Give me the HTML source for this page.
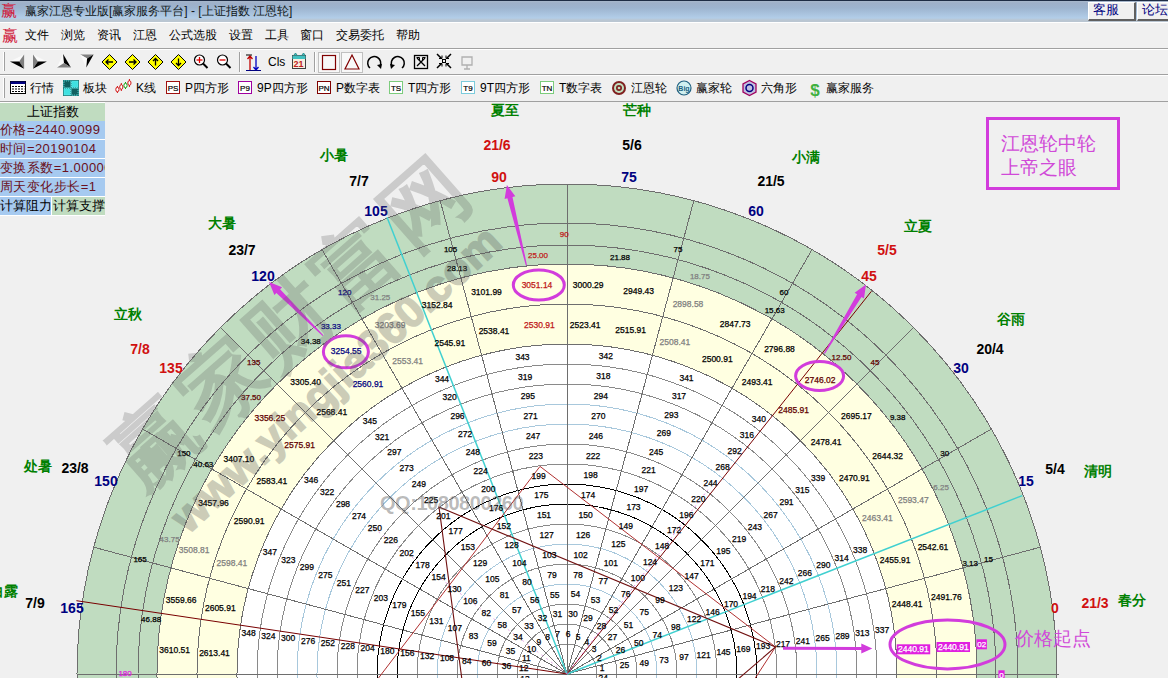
<!DOCTYPE html><html><head><meta charset="utf-8"><style>
*{margin:0;padding:0;box-sizing:border-box}
html,body{width:1168px;height:678px;overflow:hidden;background:#f0f0f0;font-family:"Liberation Sans",sans-serif;position:relative}
.a{position:absolute;white-space:nowrap}
#title{left:0;top:0;width:1168px;height:23px;background:linear-gradient(#1e2c44 0px,#1e2c44 1px,#a8b8cc 1px,#9eb0c9 3px,#9db4cf 8px,#b2cde8 18px,#bac6d2 20px,#bac6d2 21.7px,#fff 21.7px,#fff 22.8px,#f0f0f0 22.8px)}
.t12{font-size:12px;line-height:14px}
.tb{font-size:12px;line-height:14px;color:#000}
</style></head><body>

<div id="title" class="a"></div>
<div class="a" style="left:1px;top:2px;color:#d0203c;font-size:16px;line-height:17px;font-family:'Liberation Serif',serif">赢</div>
<div class="a t12" style="left:25px;top:4px;color:#101820">赢家江恩专业版[赢家服务平台] - [上证指数 江恩轮]</div>
<div class="a" style="left:1088px;top:2px;width:48px;height:19px;background:#f0f0f0;border-right:2px solid #606060;border-bottom:2px solid #606060;border-top:1px solid #fff;border-left:1px solid #fff"></div>
<div class="a" style="left:1137px;top:2px;width:31px;height:19px;background:#f0f0f0;border-bottom:2px solid #606060;border-top:1px solid #fff;border-left:1px solid #fff"></div>
<div class="a" style="left:1093px;top:2px;font-size:13px;line-height:15px;color:#000080">客服</div>
<div class="a" style="left:1142px;top:2px;font-size:13px;line-height:15px;color:#000080">论坛</div>
<div class="a" style="left:2px;top:27px;color:#d0203c;font-size:16px;line-height:17px;font-family:'Liberation Serif',serif">赢</div>
<div class="a t12" style="left:25px;top:28px;color:#000">文件</div>
<div class="a t12" style="left:61px;top:28px;color:#000">浏览</div>
<div class="a t12" style="left:97px;top:28px;color:#000">资讯</div>
<div class="a t12" style="left:133px;top:28px;color:#000">江恩</div>
<div class="a t12" style="left:169px;top:28px;color:#000">公式选股</div>
<div class="a t12" style="left:229px;top:28px;color:#000">设置</div>
<div class="a t12" style="left:265px;top:28px;color:#000">工具</div>
<div class="a t12" style="left:300px;top:28px;color:#000">窗口</div>
<div class="a t12" style="left:336px;top:28px;color:#000">交易委托</div>
<div class="a t12" style="left:396px;top:28px;color:#000">帮助</div>
<div class="a" style="left:0;top:48px;width:1168px;height:1px;background:#a0a0a0"></div>
<div class="a" style="left:0;top:49px;width:1168px;height:1px;background:#fff"></div>
<div class="a" style="left:0;top:74px;width:1168px;height:1px;background:#a0a0a0"></div>
<div class="a" style="left:0;top:75px;width:1168px;height:1px;background:#fff"></div>
<div class="a" style="left:0;top:101px;width:1168px;height:1px;background:#a0a0a0"></div>
<div class="a" style="left:3px;top:52px;width:2px;height:19px;border-left:1px solid #fff;border-right:1px solid #a0a0a0"></div>
<div class="a" style="left:3px;top:78px;width:2px;height:20px;border-left:1px solid #fff;border-right:1px solid #a0a0a0"></div>
<svg class="a" style="left:0;top:0" width="1168" height="101"><polygon points="9.9,61.4 24.1,54.5 19.2,61.4" fill="#fafafa"/><polygon points="24.1,54.5 24.1,68.7 19.2,61.4" fill="#808080"/><polygon points="9.9,61.4 19.2,61.4 24.1,68.7" fill="#000"/><polygon points="33,54.5 46.9,61.4 37.9,61.4" fill="#fafafa"/><polygon points="33,54.5 37.9,61.4 33,68.7" fill="#808080"/><polygon points="37.9,61.4 46.9,61.4 33,68.7" fill="#000"/><polygon points="63.1,54.1 64,63 57,67.5" fill="#fafafa"/><polygon points="63.1,54.1 70.9,67.5 64,63" fill="#000"/><polygon points="57,67.5 64,63 70.9,67.5" fill="#808080"/><polygon points="80.2,54.5 93.6,54.5 87.1,58.5" fill="#808080"/><polygon points="80.2,54.5 87.1,58.5 86.3,67.5" fill="#fafafa"/><polygon points="87.1,58.5 93.6,54.5 86.3,67.5" fill="#000"/><polygon points="109.5,54.5 117.0,62 109.5,69.5 102.0,62" fill="#ffff00" stroke="#000" stroke-width="1"/><path d="M113.0,62 H106.0 M108.5,59.5 L106.0,62 L108.5,64.5" stroke="#000" fill="none" stroke-width="1.3"/><polygon points="132.5,54.5 140.0,62 132.5,69.5 125.0,62" fill="#ffff00" stroke="#000" stroke-width="1"/><path d="M129.0,62 H136.0 M133.5,59.5 L136.0,62 L133.5,64.5" stroke="#000" fill="none" stroke-width="1.3"/><polygon points="155.5,54.5 163.0,62 155.5,69.5 148.0,62" fill="#ffff00" stroke="#000" stroke-width="1"/><path d="M155.5,65.5 V58.5 M153.0,61 L155.5,58.5 L158.0,61" stroke="#000" fill="none" stroke-width="1.3"/><polygon points="178.5,54.5 186.0,62 178.5,69.5 171.0,62" fill="#ffff00" stroke="#000" stroke-width="1"/><path d="M178.5,58.5 V65.5 M176.0,63 L178.5,65.5 L181.0,63" stroke="#000" fill="none" stroke-width="1.3"/><circle cx="199.5" cy="60" r="5" fill="#fff" stroke="#000" stroke-width="1.2"/><line x1="203.0" y1="63.5" x2="207.5" y2="68" stroke="#000" stroke-width="2"/><line x1="196.5" y1="60" x2="202.5" y2="60" stroke="#d00" stroke-width="1.3"/><line x1="199.5" y1="57" x2="199.5" y2="63" stroke="#d00" stroke-width="1.3"/><circle cx="222.5" cy="60" r="5" fill="#fff" stroke="#000" stroke-width="1.2"/><line x1="226.0" y1="63.5" x2="230.5" y2="68" stroke="#000" stroke-width="2"/><line x1="219.5" y1="60" x2="225.5" y2="60" stroke="#d00" stroke-width="1.3"/><line x1="239.5" y1="52" x2="239.5" y2="72" stroke="#a0a0a0"/><line x1="240.5" y1="52" x2="240.5" y2="72" stroke="#fff"/><path d="M250,70 V56 M247.5,59 L250,56 L252.5,59" stroke="#c00000" fill="none" stroke-width="1.3"/><path d="M256,56 V70 M253.5,67 L256,70 L258.5,67" stroke="#0000c0" fill="none" stroke-width="1.3"/><line x1="246" y1="70.5" x2="261" y2="70.5" stroke="#000080"/><line x1="246" y1="55" x2="252" y2="55" stroke="#000"/><rect x="292.5" y="55.5" width="13" height="13" fill="#f8f0e0" stroke="#404040"/><rect x="292.5" y="55.5" width="13" height="3.5" fill="#40c0c0"/><path d="M294,55 l1.5,-2 l1.5,2 M302,55 l1.5,-2 l1.5,2" fill="#40c0c0" stroke="#208080" stroke-width="0.8"/><line x1="314.5" y1="52" x2="314.5" y2="72" stroke="#a0a0a0"/><line x1="315.5" y1="52" x2="315.5" y2="72" stroke="#fff"/><rect x="318.5" y="52.5" width="21" height="20" fill="#f8f8f8" stroke="#c0c0c0"/><rect x="341.5" y="52.5" width="21" height="20" fill="#f8f8f8" stroke="#c0c0c0"/><rect x="322.5" y="55.5" width="13" height="14" fill="none" stroke="#800000" stroke-width="1.2"/><polygon points="352,55 359,69 345,69" fill="none" stroke="#800000" stroke-width="1.2"/><path d="M370,68 A6.5,6.5 0 1 1 380,66" fill="none" stroke="#000" stroke-width="1.5"/><polygon points="377,65 382,64 381,69" fill="#000"/><path d="M402,68 A6.5,6.5 0 1 0 392,66" fill="none" stroke="#000" stroke-width="1.5"/><polygon points="395,65 390,64 391,69" fill="#000"/><rect x="414.5" y="55.5" width="13" height="13" fill="none" stroke="#000" stroke-width="1.3"/><path d="M417,58 L425,66 M425,58 L417,66" stroke="#000" stroke-width="1.3"/><path d="M416.5,57.5 h3 v3 M425.5,57.5 h-3 v3" fill="none" stroke="#000"/><path d="M437,54 L441.5,58.5 M451,54 L446.5,58.5 M437,68 L441.5,63.5 M451,68 L446.5,63.5" stroke="#000" stroke-width="1.5"/><path d="M439,58.5 h3 v-3 M449,58.5 h-3 v-3 M439,63.5 h3 v3 M449,63.5 h-3 v3" fill="none" stroke="#000" stroke-width="1"/><rect x="442.5" y="59.5" width="3" height="3" fill="none" stroke="#000"/><path d="M462,57 h10 v8 h-10 z M467,65 v4 M464,69 h6" fill="none" stroke="#b0b0b0" stroke-width="1.3"/><text x="268" y="66" font-size="12" fill="#000" font-family="Liberation Sans">Cls</text><text x="293.5" y="67" font-size="9" fill="#c02020" font-family="Liberation Sans" font-weight="bold">21</text><rect x="10.5" y="81.5" width="15" height="12" fill="#fff" stroke="#000" stroke-width="1"/><rect x="10.5" y="81.5" width="15" height="2.5" fill="#000080"/><line x1="12" y1="86.5" x2="24.5" y2="86.5" stroke="#000" stroke-dasharray="2,1" stroke-width="1"/><line x1="12" y1="89" x2="24.5" y2="89" stroke="#000" stroke-dasharray="2,1" stroke-width="1"/><line x1="12" y1="91.5" x2="24.5" y2="91.5" stroke="#000" stroke-dasharray="2,1" stroke-width="1"/><rect x="63" y="80" width="16" height="16" fill="#208080"/><rect x="64" y="81" width="6.5" height="6.5" fill="#106060" stroke="#80ffff" stroke-width="0.6" stroke-dasharray="1,1"/><rect x="71.5" y="81" width="6.5" height="6.5" fill="#40e0e0" stroke="#80ffff" stroke-width="0.6" stroke-dasharray="1,1"/><rect x="64" y="88.5" width="6.5" height="6.5" fill="#40e0e0" stroke="#80ffff" stroke-width="0.6" stroke-dasharray="1,1"/><rect x="71.5" y="88.5" width="6.5" height="6.5" fill="#106060" stroke="#80ffff" stroke-width="0.6" stroke-dasharray="1,1"/><line x1="117.4" y1="86" x2="117.4" y2="93" stroke="#d01010" stroke-width="1"/><ellipse cx="117.4" cy="89.5" rx="1.6" ry="2.3" fill="#fff" stroke="#d01010" stroke-width="1"/><line x1="121.3" y1="83" x2="121.3" y2="91" stroke="#d01010" stroke-width="1"/><ellipse cx="121.3" cy="87.0" rx="1.6" ry="2.3" fill="#fff" stroke="#d01010" stroke-width="1"/><line x1="125.5" y1="82" x2="125.5" y2="89" stroke="#10a010" stroke-width="1"/><ellipse cx="125.5" cy="85.5" rx="1.6" ry="2.3" fill="#fff" stroke="#10a010" stroke-width="1"/><line x1="129.4" y1="79" x2="129.4" y2="87" stroke="#d01010" stroke-width="1"/><ellipse cx="129.4" cy="83.0" rx="1.6" ry="2.3" fill="#fff" stroke="#d01010" stroke-width="1"/><rect x="166.5" y="81.5" width="13" height="12" fill="#fff" stroke="#a01010"/><text x="173" y="91" font-size="8" fill="#000" stroke="#000" stroke-width="0.2" text-anchor="middle" font-family="Liberation Sans">PS</text><rect x="238.5" y="81.5" width="13" height="12" fill="#fff" stroke="#a000a0"/><text x="245" y="91" font-size="8" fill="#000" stroke="#000" stroke-width="0.2" text-anchor="middle" font-family="Liberation Sans">P9</text><rect x="317.5" y="81.5" width="13" height="12" fill="#fff" stroke="#800000"/><text x="324" y="91" font-size="8" fill="#000" stroke="#000" stroke-width="0.2" text-anchor="middle" font-family="Liberation Sans">PN</text><rect x="389.5" y="81.5" width="13" height="12" fill="#fff" stroke="#00a000" stroke-dasharray="1,1"/><text x="396" y="91" font-size="8" fill="#000" stroke="#000" stroke-width="0.2" text-anchor="middle" font-family="Liberation Sans">TS</text><rect x="461.5" y="81.5" width="13" height="12" fill="#fff" stroke="#00a0c0" stroke-dasharray="1,1"/><text x="468" y="91" font-size="8" fill="#000" stroke="#000" stroke-width="0.2" text-anchor="middle" font-family="Liberation Sans">T9</text><rect x="540.5" y="81.5" width="13" height="12" fill="#fff" stroke="#00a000" stroke-dasharray="1,1"/><text x="547" y="91" font-size="8" fill="#000" stroke="#000" stroke-width="0.2" text-anchor="middle" font-family="Liberation Sans">TN</text><circle cx="619" cy="88" r="7" fill="#802020"/><circle cx="619" cy="88" r="5" fill="#c0e0c0"/><circle cx="619" cy="88" r="3" fill="#802020"/><circle cx="619" cy="88" r="1.3" fill="#c0e0c0"/><circle cx="684" cy="88" r="7" fill="#d0f0f0" stroke="#206080" stroke-width="1.2"/><text x="684" y="91" font-size="7" text-anchor="middle" fill="#206080" font-family="Liberation Sans" font-weight="bold">Big</text><polygon points="749.5,80.5 756,84 756,92 749.5,95.5 743,92 743,84" fill="#c0c0e0" stroke="#a00060" stroke-width="1.3"/><circle cx="749.5" cy="88" r="3.5" fill="none" stroke="#000080" stroke-width="1.5"/><text x="815" y="95.5" font-size="17" text-anchor="middle" fill="#40b040" font-family="Liberation Sans" font-weight="bold">$</text></svg>
<div class="a tb" style="left:30px;top:81px">行情</div>
<div class="a tb" style="left:83px;top:81px">板块</div>
<div class="a tb" style="left:136px;top:81px">K线</div>
<div class="a tb" style="left:185px;top:81px">P四方形</div>
<div class="a tb" style="left:257px;top:81px">9P四方形</div>
<div class="a tb" style="left:336px;top:81px">P数字表</div>
<div class="a tb" style="left:408px;top:81px">T四方形</div>
<div class="a tb" style="left:480px;top:81px">9T四方形</div>
<div class="a tb" style="left:559px;top:81px">T数字表</div>
<div class="a tb" style="left:631px;top:81px">江恩轮</div>
<div class="a tb" style="left:696px;top:81px">赢家轮</div>
<div class="a tb" style="left:761px;top:81px">六角形</div>
<div class="a tb" style="left:826px;top:81px">赢家服务</div>
<div class="a" style="left:0;top:102px;width:105px;height:114px;background:#fff"></div>
<div class="a" style="left:0;top:103px;width:105px;height:18px;background:#c0dcc0;font-size:13px;line-height:18px;text-align:center;color:#000">上证指数</div>
<div class="a" style="left:0;top:121px;width:105px;height:18px;background:#a6caf0;font-size:13px;line-height:18px;color:#6a1020;overflow:hidden;letter-spacing:0.45px">价格=2440.9099</div>
<div class="a" style="left:0;top:140px;width:105px;height:18px;background:#a6caf0;font-size:13px;line-height:18px;color:#6a1020;overflow:hidden;letter-spacing:0.45px">时间=20190104</div>
<div class="a" style="left:0;top:159px;width:105px;height:18px;background:#a6caf0;font-size:13px;line-height:18px;color:#6a1020;overflow:hidden;letter-spacing:0.45px">变换系数=1.000000</div>
<div class="a" style="left:0;top:178px;width:105px;height:18px;background:#a6caf0;font-size:13px;line-height:18px;color:#6a1020;overflow:hidden;letter-spacing:0.45px">周天变化步长=1</div>
<div class="a" style="left:0;top:197px;width:51px;height:18px;background:#a6caf0;font-size:13px;line-height:18px;color:#000;overflow:hidden">计算阻力</div>
<div class="a" style="left:52px;top:197px;width:53px;height:18px;background:#c0dcc0;font-size:13px;line-height:18px;color:#000;overflow:hidden;text-align:center">计算支撑</div>
<svg class="a" style="left:0;top:102px" width="1168" height="576" viewBox="0 102 1168 576"><g shape-rendering="crispEdges"><circle cx="567" cy="674" r="490" fill="#c0dcc0" stroke="#6e6e6e" stroke-width="1"/><circle cx="567" cy="674" r="410" fill="#ffffe1" stroke="#6e6e6e" stroke-width="1"/><circle cx="567" cy="674" r="330" fill="#fff" stroke="#6e6e6e" stroke-width="1"/><circle cx="567" cy="674" r="451" fill="none" stroke="#6e6e6e" stroke-width="1"/><circle cx="567" cy="674" r="429" fill="none" stroke="#6e6e6e" stroke-width="1"/><circle cx="567" cy="674" r="370" fill="none" stroke="#6e6e6e" stroke-width="1"/><circle cx="567" cy="674" r="30" fill="none" stroke="#8a8a8a" stroke-width="1"/><circle cx="567" cy="674" r="50" fill="none" stroke="#8a8a8a" stroke-width="1"/><circle cx="567" cy="674" r="70" fill="none" stroke="#8a8a8a" stroke-width="1"/><circle cx="567" cy="674" r="90" fill="none" stroke="#a8c8dc" stroke-width="1"/><circle cx="567" cy="674" r="110" fill="none" stroke="#8a8a8a" stroke-width="1"/><circle cx="567" cy="674" r="130" fill="none" stroke="#a8c8dc" stroke-width="1"/><circle cx="567" cy="674" r="150" fill="none" stroke="#8a8a8a" stroke-width="1"/><circle cx="567" cy="674" r="170" fill="none" stroke="#8a8a8a" stroke-width="1"/><circle cx="567" cy="674" r="190" fill="none" stroke="#8a8a8a" stroke-width="1"/><circle cx="567" cy="674" r="210" fill="none" stroke="#8a8a8a" stroke-width="1"/><circle cx="567" cy="674" r="230" fill="none" stroke="#8a8a8a" stroke-width="1"/><circle cx="567" cy="674" r="250" fill="none" stroke="#a8c8dc" stroke-width="1"/><circle cx="567" cy="674" r="270" fill="none" stroke="#a8c8dc" stroke-width="1"/><circle cx="567" cy="674" r="290" fill="none" stroke="#8a8a8a" stroke-width="1"/><circle cx="567" cy="674" r="310" fill="none" stroke="#8a8a8a" stroke-width="1"/><circle cx="567" cy="674" r="170" fill="none" stroke="#000" stroke-width="1"/><circle cx="567" cy="674" r="190" fill="none" stroke="#000" stroke-width="1"/><line x1="567.0" y1="674.0" x2="1057.0" y2="674.0" stroke="#6e6e6e" stroke-width="1"/><line x1="567.0" y1="674.0" x2="1040.3" y2="547.2" stroke="#6e6e6e" stroke-width="1"/><line x1="567.0" y1="674.0" x2="991.4" y2="429.0" stroke="#6e6e6e" stroke-width="1"/><line x1="567.0" y1="674.0" x2="913.5" y2="327.5" stroke="#6e6e6e" stroke-width="1"/><line x1="567.0" y1="674.0" x2="812.0" y2="249.6" stroke="#6e6e6e" stroke-width="1"/><line x1="567.0" y1="674.0" x2="693.8" y2="200.7" stroke="#6e6e6e" stroke-width="1"/><line x1="567.0" y1="674.0" x2="567.0" y2="184.0" stroke="#6e6e6e" stroke-width="1"/><line x1="567.0" y1="674.0" x2="440.2" y2="200.7" stroke="#6e6e6e" stroke-width="1"/><line x1="567.0" y1="674.0" x2="322.0" y2="249.6" stroke="#6e6e6e" stroke-width="1"/><line x1="567.0" y1="674.0" x2="220.5" y2="327.5" stroke="#6e6e6e" stroke-width="1"/><line x1="567.0" y1="674.0" x2="142.6" y2="429.0" stroke="#6e6e6e" stroke-width="1"/><line x1="567.0" y1="674.0" x2="93.7" y2="547.2" stroke="#6e6e6e" stroke-width="1"/><line x1="567.0" y1="674.0" x2="77.0" y2="674.0" stroke="#6e6e6e" stroke-width="1"/><line x1="77" y1="674.5" x2="1059" y2="674.5" stroke="#6e6e6e" stroke-width="1"/></g><line x1="567.0" y1="674.0" x2="1022.3" y2="495.6" stroke="#40d0d0" stroke-width="1.5" /><line x1="567.0" y1="674.0" x2="387.0" y2="217.2" stroke="#40d0d0" stroke-width="1.5" /><line x1="567.0" y1="674.0" x2="871.4" y2="291.3" stroke="#780000" stroke-width="1" /><line x1="567.0" y1="674.0" x2="76.4" y2="600.7" stroke="#780000" stroke-width="1" /><line x1="567.0" y1="674.0" x2="709.7" y2="487.3" stroke="#e070e0" stroke-width="0.8" stroke-dasharray="2,3"/><line x1="567.0" y1="674.0" x2="367.3" y2="523.5" stroke="#e090e0" stroke-width="0.8" stroke-dasharray="2,4"/><polyline points="377,680 540,466.4 775.5,647 754,680" fill="none" stroke="#b03030" stroke-width="1"/><polyline points="462,680 439,507 775.5,647 737,680" fill="none" stroke="#701010" stroke-width="1.1"/><g font-family="Liberation Sans"><text x="602.1" y="668.0" font-size="8.5" fill="#000" stroke="#000" stroke-width="0.25" font-weight="normal" text-anchor="middle" dominant-baseline="central">1</text><text x="599.4" y="658.0" font-size="8.5" fill="#000" stroke="#000" stroke-width="0.25" font-weight="normal" text-anchor="middle" dominant-baseline="central">2</text><text x="594.2" y="649.1" font-size="8.5" fill="#000" stroke="#000" stroke-width="0.25" font-weight="normal" text-anchor="middle" dominant-baseline="central">3</text><text x="586.9" y="641.9" font-size="8.5" fill="#000" stroke="#000" stroke-width="0.25" font-weight="normal" text-anchor="middle" dominant-baseline="central">4</text><text x="578.0" y="636.7" font-size="8.5" fill="#000" stroke="#000" stroke-width="0.25" font-weight="normal" text-anchor="middle" dominant-baseline="central">5</text><text x="568.0" y="634.1" font-size="8.5" fill="#000" stroke="#000" stroke-width="0.25" font-weight="normal" text-anchor="middle" dominant-baseline="central">6</text><text x="557.7" y="634.2" font-size="8.5" fill="#000" stroke="#000" stroke-width="0.25" font-weight="normal" text-anchor="middle" dominant-baseline="central">7</text><text x="547.7" y="636.9" font-size="8.5" fill="#000" stroke="#000" stroke-width="0.25" font-weight="normal" text-anchor="middle" dominant-baseline="central">8</text><text x="538.8" y="642.1" font-size="8.5" fill="#000" stroke="#000" stroke-width="0.25" font-weight="normal" text-anchor="middle" dominant-baseline="central">9</text><text x="531.6" y="649.4" font-size="8.5" fill="#000" stroke="#000" stroke-width="0.25" font-weight="normal" text-anchor="middle" dominant-baseline="central">10</text><text x="526.4" y="658.3" font-size="8.5" fill="#000" stroke="#000" stroke-width="0.25" font-weight="normal" text-anchor="middle" dominant-baseline="central">11</text><text x="523.8" y="668.3" font-size="8.5" fill="#000" stroke="#000" stroke-width="0.25" font-weight="normal" text-anchor="middle" dominant-baseline="central">12</text><text x="603.2" y="678.3" font-size="8.5" fill="#000" stroke="#000" stroke-width="0.25" font-weight="normal" text-anchor="middle" dominant-baseline="central">24</text><text x="524.9" y="678.6" font-size="8.5" fill="#000" stroke="#000" stroke-width="0.25" font-weight="normal" text-anchor="middle" dominant-baseline="central">13</text><text x="624.5" y="665.3" font-size="8.5" fill="#000" stroke="#000" stroke-width="0.25" font-weight="normal" text-anchor="middle" dominant-baseline="central">25</text><text x="620.4" y="650.3" font-size="8.5" fill="#000" stroke="#000" stroke-width="0.25" font-weight="normal" text-anchor="middle" dominant-baseline="central">26</text><text x="612.6" y="636.9" font-size="8.5" fill="#000" stroke="#000" stroke-width="0.25" font-weight="normal" text-anchor="middle" dominant-baseline="central">27</text><text x="601.5" y="625.9" font-size="8.5" fill="#000" stroke="#000" stroke-width="0.25" font-weight="normal" text-anchor="middle" dominant-baseline="central">28</text><text x="588.0" y="618.2" font-size="8.5" fill="#000" stroke="#000" stroke-width="0.25" font-weight="normal" text-anchor="middle" dominant-baseline="central">29</text><text x="573.0" y="614.3" font-size="8.5" fill="#000" stroke="#000" stroke-width="0.25" font-weight="normal" text-anchor="middle" dominant-baseline="central">30</text><text x="557.5" y="614.3" font-size="8.5" fill="#000" stroke="#000" stroke-width="0.25" font-weight="normal" text-anchor="middle" dominant-baseline="central">31</text><text x="542.5" y="618.4" font-size="8.5" fill="#000" stroke="#000" stroke-width="0.25" font-weight="normal" text-anchor="middle" dominant-baseline="central">32</text><text x="529.1" y="626.2" font-size="8.5" fill="#000" stroke="#000" stroke-width="0.25" font-weight="normal" text-anchor="middle" dominant-baseline="central">33</text><text x="518.1" y="637.3" font-size="8.5" fill="#000" stroke="#000" stroke-width="0.25" font-weight="normal" text-anchor="middle" dominant-baseline="central">34</text><text x="510.4" y="650.8" font-size="8.5" fill="#000" stroke="#000" stroke-width="0.25" font-weight="normal" text-anchor="middle" dominant-baseline="central">35</text><text x="506.5" y="665.8" font-size="8.5" fill="#000" stroke="#000" stroke-width="0.25" font-weight="normal" text-anchor="middle" dominant-baseline="central">36</text><text x="623.0" y="680.8" font-size="8.5" fill="#000" stroke="#000" stroke-width="0.25" font-weight="normal" text-anchor="middle" dominant-baseline="central">48</text><text x="505.0" y="681.3" font-size="8.5" fill="#000" stroke="#000" stroke-width="0.25" font-weight="normal" text-anchor="middle" dominant-baseline="central">37</text><text x="644.3" y="662.6" font-size="8.5" fill="#000" stroke="#000" stroke-width="0.25" font-weight="normal" text-anchor="middle" dominant-baseline="central">49</text><text x="638.8" y="642.6" font-size="8.5" fill="#000" stroke="#000" stroke-width="0.25" font-weight="normal" text-anchor="middle" dominant-baseline="central">50</text><text x="628.4" y="624.6" font-size="8.5" fill="#000" stroke="#000" stroke-width="0.25" font-weight="normal" text-anchor="middle" dominant-baseline="central">51</text><text x="613.6" y="610.0" font-size="8.5" fill="#000" stroke="#000" stroke-width="0.25" font-weight="normal" text-anchor="middle" dominant-baseline="central">52</text><text x="595.6" y="599.7" font-size="8.5" fill="#000" stroke="#000" stroke-width="0.25" font-weight="normal" text-anchor="middle" dominant-baseline="central">53</text><text x="575.5" y="594.4" font-size="8.5" fill="#000" stroke="#000" stroke-width="0.25" font-weight="normal" text-anchor="middle" dominant-baseline="central">54</text><text x="554.8" y="594.5" font-size="8.5" fill="#000" stroke="#000" stroke-width="0.25" font-weight="normal" text-anchor="middle" dominant-baseline="central">55</text><text x="534.8" y="600.0" font-size="8.5" fill="#000" stroke="#000" stroke-width="0.25" font-weight="normal" text-anchor="middle" dominant-baseline="central">56</text><text x="516.8" y="610.4" font-size="8.5" fill="#000" stroke="#000" stroke-width="0.25" font-weight="normal" text-anchor="middle" dominant-baseline="central">57</text><text x="502.2" y="625.2" font-size="8.5" fill="#000" stroke="#000" stroke-width="0.25" font-weight="normal" text-anchor="middle" dominant-baseline="central">58</text><text x="491.9" y="643.2" font-size="8.5" fill="#000" stroke="#000" stroke-width="0.25" font-weight="normal" text-anchor="middle" dominant-baseline="central">59</text><text x="486.6" y="663.3" font-size="8.5" fill="#000" stroke="#000" stroke-width="0.25" font-weight="normal" text-anchor="middle" dominant-baseline="central">60</text><text x="642.9" y="683.3" font-size="8.5" fill="#000" stroke="#000" stroke-width="0.25" font-weight="normal" text-anchor="middle" dominant-baseline="central">72</text><text x="485.2" y="684.0" font-size="8.5" fill="#000" stroke="#000" stroke-width="0.25" font-weight="normal" text-anchor="middle" dominant-baseline="central">61</text><text x="664.1" y="659.9" font-size="8.5" fill="#000" stroke="#000" stroke-width="0.25" font-weight="normal" text-anchor="middle" dominant-baseline="central">73</text><text x="657.3" y="634.8" font-size="8.5" fill="#000" stroke="#000" stroke-width="0.25" font-weight="normal" text-anchor="middle" dominant-baseline="central">74</text><text x="644.2" y="612.4" font-size="8.5" fill="#000" stroke="#000" stroke-width="0.25" font-weight="normal" text-anchor="middle" dominant-baseline="central">75</text><text x="625.7" y="594.1" font-size="8.5" fill="#000" stroke="#000" stroke-width="0.25" font-weight="normal" text-anchor="middle" dominant-baseline="central">76</text><text x="603.2" y="581.2" font-size="8.5" fill="#000" stroke="#000" stroke-width="0.25" font-weight="normal" text-anchor="middle" dominant-baseline="central">77</text><text x="578.1" y="574.6" font-size="8.5" fill="#000" stroke="#000" stroke-width="0.25" font-weight="normal" text-anchor="middle" dominant-baseline="central">78</text><text x="552.1" y="574.7" font-size="8.5" fill="#000" stroke="#000" stroke-width="0.25" font-weight="normal" text-anchor="middle" dominant-baseline="central">79</text><text x="527.0" y="581.5" font-size="8.5" fill="#000" stroke="#000" stroke-width="0.25" font-weight="normal" text-anchor="middle" dominant-baseline="central">80</text><text x="504.6" y="594.6" font-size="8.5" fill="#000" stroke="#000" stroke-width="0.25" font-weight="normal" text-anchor="middle" dominant-baseline="central">81</text><text x="486.3" y="613.1" font-size="8.5" fill="#000" stroke="#000" stroke-width="0.25" font-weight="normal" text-anchor="middle" dominant-baseline="central">82</text><text x="473.4" y="635.6" font-size="8.5" fill="#000" stroke="#000" stroke-width="0.25" font-weight="normal" text-anchor="middle" dominant-baseline="central">83</text><text x="466.8" y="660.7" font-size="8.5" fill="#000" stroke="#000" stroke-width="0.25" font-weight="normal" text-anchor="middle" dominant-baseline="central">84</text><text x="662.7" y="685.9" font-size="8.5" fill="#000" stroke="#000" stroke-width="0.25" font-weight="normal" text-anchor="middle" dominant-baseline="central">96</text><text x="465.4" y="686.7" font-size="8.5" fill="#000" stroke="#000" stroke-width="0.25" font-weight="normal" text-anchor="middle" dominant-baseline="central">85</text><text x="683.9" y="657.2" font-size="8.5" fill="#000" stroke="#000" stroke-width="0.25" font-weight="normal" text-anchor="middle" dominant-baseline="central">97</text><text x="675.7" y="627.1" font-size="8.5" fill="#000" stroke="#000" stroke-width="0.25" font-weight="normal" text-anchor="middle" dominant-baseline="central">98</text><text x="660.0" y="600.2" font-size="8.5" fill="#000" stroke="#000" stroke-width="0.25" font-weight="normal" text-anchor="middle" dominant-baseline="central">99</text><text x="637.8" y="578.2" font-size="8.5" fill="#000" stroke="#000" stroke-width="0.25" font-weight="normal" text-anchor="middle" dominant-baseline="central">100</text><text x="610.8" y="562.7" font-size="8.5" fill="#000" stroke="#000" stroke-width="0.25" font-weight="normal" text-anchor="middle" dominant-baseline="central">101</text><text x="580.6" y="554.8" font-size="8.5" fill="#000" stroke="#000" stroke-width="0.25" font-weight="normal" text-anchor="middle" dominant-baseline="central">102</text><text x="549.4" y="554.9" font-size="8.5" fill="#000" stroke="#000" stroke-width="0.25" font-weight="normal" text-anchor="middle" dominant-baseline="central">103</text><text x="519.3" y="563.1" font-size="8.5" fill="#000" stroke="#000" stroke-width="0.25" font-weight="normal" text-anchor="middle" dominant-baseline="central">104</text><text x="492.4" y="578.8" font-size="8.5" fill="#000" stroke="#000" stroke-width="0.25" font-weight="normal" text-anchor="middle" dominant-baseline="central">105</text><text x="470.4" y="601.0" font-size="8.5" fill="#000" stroke="#000" stroke-width="0.25" font-weight="normal" text-anchor="middle" dominant-baseline="central">106</text><text x="454.9" y="628.0" font-size="8.5" fill="#000" stroke="#000" stroke-width="0.25" font-weight="normal" text-anchor="middle" dominant-baseline="central">107</text><text x="447.0" y="658.2" font-size="8.5" fill="#000" stroke="#000" stroke-width="0.25" font-weight="normal" text-anchor="middle" dominant-baseline="central">108</text><text x="682.5" y="688.4" font-size="8.5" fill="#000" stroke="#000" stroke-width="0.25" font-weight="normal" text-anchor="middle" dominant-baseline="central">120</text><text x="445.6" y="689.4" font-size="8.5" fill="#000" stroke="#000" stroke-width="0.25" font-weight="normal" text-anchor="middle" dominant-baseline="central">109</text><text x="703.7" y="654.5" font-size="8.5" fill="#000" stroke="#000" stroke-width="0.25" font-weight="normal" text-anchor="middle" dominant-baseline="central">121</text><text x="694.2" y="619.4" font-size="8.5" fill="#000" stroke="#000" stroke-width="0.25" font-weight="normal" text-anchor="middle" dominant-baseline="central">122</text><text x="675.8" y="587.9" font-size="8.5" fill="#000" stroke="#000" stroke-width="0.25" font-weight="normal" text-anchor="middle" dominant-baseline="central">123</text><text x="650.0" y="562.3" font-size="8.5" fill="#000" stroke="#000" stroke-width="0.25" font-weight="normal" text-anchor="middle" dominant-baseline="central">124</text><text x="618.3" y="544.2" font-size="8.5" fill="#000" stroke="#000" stroke-width="0.25" font-weight="normal" text-anchor="middle" dominant-baseline="central">125</text><text x="583.1" y="534.9" font-size="8.5" fill="#000" stroke="#000" stroke-width="0.25" font-weight="normal" text-anchor="middle" dominant-baseline="central">126</text><text x="546.7" y="535.1" font-size="8.5" fill="#000" stroke="#000" stroke-width="0.25" font-weight="normal" text-anchor="middle" dominant-baseline="central">127</text><text x="511.6" y="544.6" font-size="8.5" fill="#000" stroke="#000" stroke-width="0.25" font-weight="normal" text-anchor="middle" dominant-baseline="central">128</text><text x="480.1" y="563.0" font-size="8.5" fill="#000" stroke="#000" stroke-width="0.25" font-weight="normal" text-anchor="middle" dominant-baseline="central">129</text><text x="454.5" y="588.8" font-size="8.5" fill="#000" stroke="#000" stroke-width="0.25" font-weight="normal" text-anchor="middle" dominant-baseline="central">130</text><text x="436.4" y="620.5" font-size="8.5" fill="#000" stroke="#000" stroke-width="0.25" font-weight="normal" text-anchor="middle" dominant-baseline="central">131</text><text x="427.1" y="655.7" font-size="8.5" fill="#000" stroke="#000" stroke-width="0.25" font-weight="normal" text-anchor="middle" dominant-baseline="central">132</text><text x="702.4" y="690.9" font-size="8.5" fill="#000" stroke="#000" stroke-width="0.25" font-weight="normal" text-anchor="middle" dominant-baseline="central">144</text><text x="425.8" y="692.1" font-size="8.5" fill="#000" stroke="#000" stroke-width="0.25" font-weight="normal" text-anchor="middle" dominant-baseline="central">133</text><text x="723.5" y="651.8" font-size="8.5" fill="#000" stroke="#000" stroke-width="0.25" font-weight="normal" text-anchor="middle" dominant-baseline="central">145</text><text x="712.6" y="611.6" font-size="8.5" fill="#000" stroke="#000" stroke-width="0.25" font-weight="normal" text-anchor="middle" dominant-baseline="central">146</text><text x="691.6" y="575.7" font-size="8.5" fill="#000" stroke="#000" stroke-width="0.25" font-weight="normal" text-anchor="middle" dominant-baseline="central">147</text><text x="662.1" y="546.4" font-size="8.5" fill="#000" stroke="#000" stroke-width="0.25" font-weight="normal" text-anchor="middle" dominant-baseline="central">148</text><text x="625.9" y="525.7" font-size="8.5" fill="#000" stroke="#000" stroke-width="0.25" font-weight="normal" text-anchor="middle" dominant-baseline="central">149</text><text x="585.7" y="515.1" font-size="8.5" fill="#000" stroke="#000" stroke-width="0.25" font-weight="normal" text-anchor="middle" dominant-baseline="central">150</text><text x="544.0" y="515.3" font-size="8.5" fill="#000" stroke="#000" stroke-width="0.25" font-weight="normal" text-anchor="middle" dominant-baseline="central">151</text><text x="503.8" y="526.2" font-size="8.5" fill="#000" stroke="#000" stroke-width="0.25" font-weight="normal" text-anchor="middle" dominant-baseline="central">152</text><text x="467.9" y="547.2" font-size="8.5" fill="#000" stroke="#000" stroke-width="0.25" font-weight="normal" text-anchor="middle" dominant-baseline="central">153</text><text x="438.6" y="576.7" font-size="8.5" fill="#000" stroke="#000" stroke-width="0.25" font-weight="normal" text-anchor="middle" dominant-baseline="central">154</text><text x="417.9" y="612.9" font-size="8.5" fill="#000" stroke="#000" stroke-width="0.25" font-weight="normal" text-anchor="middle" dominant-baseline="central">155</text><text x="407.3" y="653.1" font-size="8.5" fill="#000" stroke="#000" stroke-width="0.25" font-weight="normal" text-anchor="middle" dominant-baseline="central">156</text><text x="722.2" y="693.5" font-size="8.5" fill="#000" stroke="#000" stroke-width="0.25" font-weight="normal" text-anchor="middle" dominant-baseline="central">168</text><text x="406.0" y="694.8" font-size="8.5" fill="#000" stroke="#000" stroke-width="0.25" font-weight="normal" text-anchor="middle" dominant-baseline="central">157</text><text x="743.4" y="649.1" font-size="8.5" fill="#000" stroke="#000" stroke-width="0.25" font-weight="normal" text-anchor="middle" dominant-baseline="central">169</text><text x="731.0" y="603.9" font-size="8.5" fill="#000" stroke="#000" stroke-width="0.25" font-weight="normal" text-anchor="middle" dominant-baseline="central">170</text><text x="707.4" y="563.4" font-size="8.5" fill="#000" stroke="#000" stroke-width="0.25" font-weight="normal" text-anchor="middle" dominant-baseline="central">171</text><text x="674.2" y="530.4" font-size="8.5" fill="#000" stroke="#000" stroke-width="0.25" font-weight="normal" text-anchor="middle" dominant-baseline="central">172</text><text x="633.5" y="507.2" font-size="8.5" fill="#000" stroke="#000" stroke-width="0.25" font-weight="normal" text-anchor="middle" dominant-baseline="central">173</text><text x="588.2" y="495.2" font-size="8.5" fill="#000" stroke="#000" stroke-width="0.25" font-weight="normal" text-anchor="middle" dominant-baseline="central">174</text><text x="541.3" y="495.4" font-size="8.5" fill="#000" stroke="#000" stroke-width="0.25" font-weight="normal" text-anchor="middle" dominant-baseline="central">175</text><text x="496.1" y="507.8" font-size="8.5" fill="#000" stroke="#000" stroke-width="0.25" font-weight="normal" text-anchor="middle" dominant-baseline="central">176</text><text x="455.6" y="531.4" font-size="8.5" fill="#000" stroke="#000" stroke-width="0.25" font-weight="normal" text-anchor="middle" dominant-baseline="central">177</text><text x="422.6" y="564.6" font-size="8.5" fill="#000" stroke="#000" stroke-width="0.25" font-weight="normal" text-anchor="middle" dominant-baseline="central">178</text><text x="399.4" y="605.3" font-size="8.5" fill="#000" stroke="#000" stroke-width="0.25" font-weight="normal" text-anchor="middle" dominant-baseline="central">179</text><text x="387.4" y="650.6" font-size="8.5" fill="#000" stroke="#000" stroke-width="0.25" font-weight="normal" text-anchor="middle" dominant-baseline="central">180</text><text x="742.1" y="696.0" font-size="8.5" fill="#000" stroke="#000" stroke-width="0.25" font-weight="normal" text-anchor="middle" dominant-baseline="central">192</text><text x="386.1" y="697.5" font-size="8.5" fill="#000" stroke="#000" stroke-width="0.25" font-weight="normal" text-anchor="middle" dominant-baseline="central">181</text><text x="763.2" y="646.4" font-size="8.5" fill="#000" stroke="#000" stroke-width="0.25" font-weight="normal" text-anchor="middle" dominant-baseline="central">193</text><text x="749.5" y="596.2" font-size="8.5" fill="#000" stroke="#000" stroke-width="0.25" font-weight="normal" text-anchor="middle" dominant-baseline="central">194</text><text x="723.3" y="551.2" font-size="8.5" fill="#000" stroke="#000" stroke-width="0.25" font-weight="normal" text-anchor="middle" dominant-baseline="central">195</text><text x="686.3" y="514.5" font-size="8.5" fill="#000" stroke="#000" stroke-width="0.25" font-weight="normal" text-anchor="middle" dominant-baseline="central">196</text><text x="641.1" y="488.7" font-size="8.5" fill="#000" stroke="#000" stroke-width="0.25" font-weight="normal" text-anchor="middle" dominant-baseline="central">197</text><text x="590.7" y="475.4" font-size="8.5" fill="#000" stroke="#000" stroke-width="0.25" font-weight="normal" text-anchor="middle" dominant-baseline="central">198</text><text x="538.6" y="475.6" font-size="8.5" fill="#000" stroke="#000" stroke-width="0.25" font-weight="normal" text-anchor="middle" dominant-baseline="central">199</text><text x="488.4" y="489.3" font-size="8.5" fill="#000" stroke="#000" stroke-width="0.25" font-weight="normal" text-anchor="middle" dominant-baseline="central">200</text><text x="443.4" y="515.5" font-size="8.5" fill="#000" stroke="#000" stroke-width="0.25" font-weight="normal" text-anchor="middle" dominant-baseline="central">201</text><text x="406.7" y="552.5" font-size="8.5" fill="#000" stroke="#000" stroke-width="0.25" font-weight="normal" text-anchor="middle" dominant-baseline="central">202</text><text x="380.9" y="597.7" font-size="8.5" fill="#000" stroke="#000" stroke-width="0.25" font-weight="normal" text-anchor="middle" dominant-baseline="central">203</text><text x="367.6" y="648.1" font-size="8.5" fill="#000" stroke="#000" stroke-width="0.25" font-weight="normal" text-anchor="middle" dominant-baseline="central">204</text><text x="761.9" y="698.5" font-size="8.5" fill="#000" stroke="#000" stroke-width="0.25" font-weight="normal" text-anchor="middle" dominant-baseline="central">216</text><text x="366.3" y="700.2" font-size="8.5" fill="#000" stroke="#000" stroke-width="0.25" font-weight="normal" text-anchor="middle" dominant-baseline="central">205</text><text x="783.0" y="643.7" font-size="8.5" fill="#000" stroke="#000" stroke-width="0.25" font-weight="normal" text-anchor="middle" dominant-baseline="central">217</text><text x="767.9" y="588.5" font-size="8.5" fill="#000" stroke="#000" stroke-width="0.25" font-weight="normal" text-anchor="middle" dominant-baseline="central">218</text><text x="739.1" y="538.9" font-size="8.5" fill="#000" stroke="#000" stroke-width="0.25" font-weight="normal" text-anchor="middle" dominant-baseline="central">219</text><text x="698.4" y="498.6" font-size="8.5" fill="#000" stroke="#000" stroke-width="0.25" font-weight="normal" text-anchor="middle" dominant-baseline="central">220</text><text x="648.6" y="470.2" font-size="8.5" fill="#000" stroke="#000" stroke-width="0.25" font-weight="normal" text-anchor="middle" dominant-baseline="central">221</text><text x="593.2" y="455.6" font-size="8.5" fill="#000" stroke="#000" stroke-width="0.25" font-weight="normal" text-anchor="middle" dominant-baseline="central">222</text><text x="535.9" y="455.8" font-size="8.5" fill="#000" stroke="#000" stroke-width="0.25" font-weight="normal" text-anchor="middle" dominant-baseline="central">223</text><text x="480.7" y="470.9" font-size="8.5" fill="#000" stroke="#000" stroke-width="0.25" font-weight="normal" text-anchor="middle" dominant-baseline="central">224</text><text x="431.1" y="499.7" font-size="8.5" fill="#000" stroke="#000" stroke-width="0.25" font-weight="normal" text-anchor="middle" dominant-baseline="central">225</text><text x="390.8" y="540.4" font-size="8.5" fill="#000" stroke="#000" stroke-width="0.25" font-weight="normal" text-anchor="middle" dominant-baseline="central">226</text><text x="362.4" y="590.2" font-size="8.5" fill="#000" stroke="#000" stroke-width="0.25" font-weight="normal" text-anchor="middle" dominant-baseline="central">227</text><text x="347.8" y="645.6" font-size="8.5" fill="#000" stroke="#000" stroke-width="0.25" font-weight="normal" text-anchor="middle" dominant-baseline="central">228</text><text x="781.7" y="701.0" font-size="8.5" fill="#000" stroke="#000" stroke-width="0.25" font-weight="normal" text-anchor="middle" dominant-baseline="central">240</text><text x="346.5" y="702.9" font-size="8.5" fill="#000" stroke="#000" stroke-width="0.25" font-weight="normal" text-anchor="middle" dominant-baseline="central">229</text><text x="802.8" y="641.0" font-size="8.5" fill="#000" stroke="#000" stroke-width="0.25" font-weight="normal" text-anchor="middle" dominant-baseline="central">241</text><text x="786.4" y="580.7" font-size="8.5" fill="#000" stroke="#000" stroke-width="0.25" font-weight="normal" text-anchor="middle" dominant-baseline="central">242</text><text x="754.9" y="526.7" font-size="8.5" fill="#000" stroke="#000" stroke-width="0.25" font-weight="normal" text-anchor="middle" dominant-baseline="central">243</text><text x="710.5" y="482.7" font-size="8.5" fill="#000" stroke="#000" stroke-width="0.25" font-weight="normal" text-anchor="middle" dominant-baseline="central">244</text><text x="656.2" y="451.6" font-size="8.5" fill="#000" stroke="#000" stroke-width="0.25" font-weight="normal" text-anchor="middle" dominant-baseline="central">245</text><text x="595.8" y="435.7" font-size="8.5" fill="#000" stroke="#000" stroke-width="0.25" font-weight="normal" text-anchor="middle" dominant-baseline="central">246</text><text x="533.2" y="436.0" font-size="8.5" fill="#000" stroke="#000" stroke-width="0.25" font-weight="normal" text-anchor="middle" dominant-baseline="central">247</text><text x="472.9" y="452.4" font-size="8.5" fill="#000" stroke="#000" stroke-width="0.25" font-weight="normal" text-anchor="middle" dominant-baseline="central">248</text><text x="418.9" y="483.9" font-size="8.5" fill="#000" stroke="#000" stroke-width="0.25" font-weight="normal" text-anchor="middle" dominant-baseline="central">249</text><text x="374.9" y="528.3" font-size="8.5" fill="#000" stroke="#000" stroke-width="0.25" font-weight="normal" text-anchor="middle" dominant-baseline="central">250</text><text x="343.8" y="582.6" font-size="8.5" fill="#000" stroke="#000" stroke-width="0.25" font-weight="normal" text-anchor="middle" dominant-baseline="central">251</text><text x="327.9" y="643.0" font-size="8.5" fill="#000" stroke="#000" stroke-width="0.25" font-weight="normal" text-anchor="middle" dominant-baseline="central">252</text><text x="801.6" y="703.6" font-size="8.5" fill="#000" stroke="#000" stroke-width="0.25" font-weight="normal" text-anchor="middle" dominant-baseline="central">264</text><text x="326.7" y="705.6" font-size="8.5" fill="#000" stroke="#000" stroke-width="0.25" font-weight="normal" text-anchor="middle" dominant-baseline="central">253</text><text x="822.6" y="638.4" font-size="8.5" fill="#000" stroke="#000" stroke-width="0.25" font-weight="normal" text-anchor="middle" dominant-baseline="central">265</text><text x="804.8" y="573.0" font-size="8.5" fill="#000" stroke="#000" stroke-width="0.25" font-weight="normal" text-anchor="middle" dominant-baseline="central">266</text><text x="770.7" y="514.5" font-size="8.5" fill="#000" stroke="#000" stroke-width="0.25" font-weight="normal" text-anchor="middle" dominant-baseline="central">267</text><text x="722.6" y="466.8" font-size="8.5" fill="#000" stroke="#000" stroke-width="0.25" font-weight="normal" text-anchor="middle" dominant-baseline="central">268</text><text x="663.8" y="433.1" font-size="8.5" fill="#000" stroke="#000" stroke-width="0.25" font-weight="normal" text-anchor="middle" dominant-baseline="central">269</text><text x="598.3" y="415.9" font-size="8.5" fill="#000" stroke="#000" stroke-width="0.25" font-weight="normal" text-anchor="middle" dominant-baseline="central">270</text><text x="530.6" y="416.2" font-size="8.5" fill="#000" stroke="#000" stroke-width="0.25" font-weight="normal" text-anchor="middle" dominant-baseline="central">271</text><text x="465.2" y="434.0" font-size="8.5" fill="#000" stroke="#000" stroke-width="0.25" font-weight="normal" text-anchor="middle" dominant-baseline="central">272</text><text x="406.7" y="468.1" font-size="8.5" fill="#000" stroke="#000" stroke-width="0.25" font-weight="normal" text-anchor="middle" dominant-baseline="central">273</text><text x="359.0" y="516.2" font-size="8.5" fill="#000" stroke="#000" stroke-width="0.25" font-weight="normal" text-anchor="middle" dominant-baseline="central">274</text><text x="325.3" y="575.0" font-size="8.5" fill="#000" stroke="#000" stroke-width="0.25" font-weight="normal" text-anchor="middle" dominant-baseline="central">275</text><text x="308.1" y="640.5" font-size="8.5" fill="#000" stroke="#000" stroke-width="0.25" font-weight="normal" text-anchor="middle" dominant-baseline="central">276</text><text x="821.4" y="706.1" font-size="8.5" fill="#000" stroke="#000" stroke-width="0.25" font-weight="normal" text-anchor="middle" dominant-baseline="central">288</text><text x="306.9" y="708.2" font-size="8.5" fill="#000" stroke="#000" stroke-width="0.25" font-weight="normal" text-anchor="middle" dominant-baseline="central">277</text><text x="842.5" y="635.7" font-size="8.5" fill="#000" stroke="#000" stroke-width="0.25" font-weight="normal" text-anchor="middle" dominant-baseline="central">289</text><text x="823.3" y="565.3" font-size="8.5" fill="#000" stroke="#000" stroke-width="0.25" font-weight="normal" text-anchor="middle" dominant-baseline="central">290</text><text x="786.5" y="502.2" font-size="8.5" fill="#000" stroke="#000" stroke-width="0.25" font-weight="normal" text-anchor="middle" dominant-baseline="central">291</text><text x="734.7" y="450.8" font-size="8.5" fill="#000" stroke="#000" stroke-width="0.25" font-weight="normal" text-anchor="middle" dominant-baseline="central">292</text><text x="671.4" y="414.6" font-size="8.5" fill="#000" stroke="#000" stroke-width="0.25" font-weight="normal" text-anchor="middle" dominant-baseline="central">293</text><text x="600.8" y="396.0" font-size="8.5" fill="#000" stroke="#000" stroke-width="0.25" font-weight="normal" text-anchor="middle" dominant-baseline="central">294</text><text x="527.9" y="396.3" font-size="8.5" fill="#000" stroke="#000" stroke-width="0.25" font-weight="normal" text-anchor="middle" dominant-baseline="central">295</text><text x="457.5" y="415.5" font-size="8.5" fill="#000" stroke="#000" stroke-width="0.25" font-weight="normal" text-anchor="middle" dominant-baseline="central">296</text><text x="394.4" y="452.3" font-size="8.5" fill="#000" stroke="#000" stroke-width="0.25" font-weight="normal" text-anchor="middle" dominant-baseline="central">297</text><text x="343.0" y="504.1" font-size="8.5" fill="#000" stroke="#000" stroke-width="0.25" font-weight="normal" text-anchor="middle" dominant-baseline="central">298</text><text x="306.8" y="567.4" font-size="8.5" fill="#000" stroke="#000" stroke-width="0.25" font-weight="normal" text-anchor="middle" dominant-baseline="central">299</text><text x="288.2" y="638.0" font-size="8.5" fill="#000" stroke="#000" stroke-width="0.25" font-weight="normal" text-anchor="middle" dominant-baseline="central">300</text><text x="841.3" y="708.6" font-size="8.5" fill="#000" stroke="#000" stroke-width="0.25" font-weight="normal" text-anchor="middle" dominant-baseline="central">312</text><text x="287.0" y="710.9" font-size="8.5" fill="#000" stroke="#000" stroke-width="0.25" font-weight="normal" text-anchor="middle" dominant-baseline="central">301</text><text x="862.3" y="633.0" font-size="8.5" fill="#000" stroke="#000" stroke-width="0.25" font-weight="normal" text-anchor="middle" dominant-baseline="central">313</text><text x="841.7" y="557.5" font-size="8.5" fill="#000" stroke="#000" stroke-width="0.25" font-weight="normal" text-anchor="middle" dominant-baseline="central">314</text><text x="802.3" y="490.0" font-size="8.5" fill="#000" stroke="#000" stroke-width="0.25" font-weight="normal" text-anchor="middle" dominant-baseline="central">315</text><text x="746.8" y="434.9" font-size="8.5" fill="#000" stroke="#000" stroke-width="0.25" font-weight="normal" text-anchor="middle" dominant-baseline="central">316</text><text x="679.0" y="396.1" font-size="8.5" fill="#000" stroke="#000" stroke-width="0.25" font-weight="normal" text-anchor="middle" dominant-baseline="central">317</text><text x="603.3" y="376.2" font-size="8.5" fill="#000" stroke="#000" stroke-width="0.25" font-weight="normal" text-anchor="middle" dominant-baseline="central">318</text><text x="525.2" y="376.5" font-size="8.5" fill="#000" stroke="#000" stroke-width="0.25" font-weight="normal" text-anchor="middle" dominant-baseline="central">319</text><text x="449.7" y="397.1" font-size="8.5" fill="#000" stroke="#000" stroke-width="0.25" font-weight="normal" text-anchor="middle" dominant-baseline="central">320</text><text x="382.2" y="436.5" font-size="8.5" fill="#000" stroke="#000" stroke-width="0.25" font-weight="normal" text-anchor="middle" dominant-baseline="central">321</text><text x="327.1" y="492.0" font-size="8.5" fill="#000" stroke="#000" stroke-width="0.25" font-weight="normal" text-anchor="middle" dominant-baseline="central">322</text><text x="288.3" y="559.8" font-size="8.5" fill="#000" stroke="#000" stroke-width="0.25" font-weight="normal" text-anchor="middle" dominant-baseline="central">323</text><text x="268.4" y="635.5" font-size="8.5" fill="#000" stroke="#000" stroke-width="0.25" font-weight="normal" text-anchor="middle" dominant-baseline="central">324</text><text x="861.1" y="711.1" font-size="8.5" fill="#000" stroke="#000" stroke-width="0.25" font-weight="normal" text-anchor="middle" dominant-baseline="central">336</text><text x="267.2" y="713.6" font-size="8.5" fill="#000" stroke="#000" stroke-width="0.25" font-weight="normal" text-anchor="middle" dominant-baseline="central">325</text><text x="882.1" y="630.3" font-size="8.5" fill="#000" stroke="#000" stroke-width="0.25" font-weight="normal" text-anchor="middle" dominant-baseline="central">337</text><text x="860.2" y="549.8" font-size="8.5" fill="#000" stroke="#000" stroke-width="0.25" font-weight="normal" text-anchor="middle" dominant-baseline="central">338</text><text x="818.2" y="477.7" font-size="8.5" fill="#000" stroke="#000" stroke-width="0.25" font-weight="normal" text-anchor="middle" dominant-baseline="central">339</text><text x="758.9" y="419.0" font-size="8.5" fill="#000" stroke="#000" stroke-width="0.25" font-weight="normal" text-anchor="middle" dominant-baseline="central">340</text><text x="686.5" y="377.6" font-size="8.5" fill="#000" stroke="#000" stroke-width="0.25" font-weight="normal" text-anchor="middle" dominant-baseline="central">341</text><text x="605.9" y="356.4" font-size="8.5" fill="#000" stroke="#000" stroke-width="0.25" font-weight="normal" text-anchor="middle" dominant-baseline="central">342</text><text x="522.5" y="356.7" font-size="8.5" fill="#000" stroke="#000" stroke-width="0.25" font-weight="normal" text-anchor="middle" dominant-baseline="central">343</text><text x="442.0" y="378.6" font-size="8.5" fill="#000" stroke="#000" stroke-width="0.25" font-weight="normal" text-anchor="middle" dominant-baseline="central">344</text><text x="369.9" y="420.6" font-size="8.5" fill="#000" stroke="#000" stroke-width="0.25" font-weight="normal" text-anchor="middle" dominant-baseline="central">345</text><text x="311.2" y="479.9" font-size="8.5" fill="#000" stroke="#000" stroke-width="0.25" font-weight="normal" text-anchor="middle" dominant-baseline="central">346</text><text x="269.8" y="552.3" font-size="8.5" fill="#000" stroke="#000" stroke-width="0.25" font-weight="normal" text-anchor="middle" dominant-baseline="central">347</text><text x="248.6" y="632.9" font-size="8.5" fill="#000" stroke="#000" stroke-width="0.25" font-weight="normal" text-anchor="middle" dominant-baseline="central">348</text><text x="880.9" y="713.7" font-size="8.5" fill="#000" stroke="#000" stroke-width="0.25" font-weight="normal" text-anchor="middle" dominant-baseline="central">360</text><text x="247.4" y="716.3" font-size="8.5" fill="#000" stroke="#000" stroke-width="0.25" font-weight="normal" text-anchor="middle" dominant-baseline="central">349</text><rect x="936.5" y="642.0" width="33.5" height="10" fill="#e020e0"/><text x="953.3" y="647.0" font-size="8.5" fill="#fff" stroke="#fff" stroke-width="0.25" font-weight="normal" text-anchor="middle" dominant-baseline="central">2440.91</text><rect x="896.7" y="644.3" width="33.5" height="10" fill="#e020e0"/><text x="913.4" y="649.3" font-size="8.5" fill="#fff" stroke="#fff" stroke-width="0.25" font-weight="normal" text-anchor="middle" dominant-baseline="central">2440.91</text><text x="946.4" y="596.5" font-size="8.5" fill="#000" stroke="#000" stroke-width="0.25" font-weight="normal" text-anchor="middle" dominant-baseline="central">2491.76</text><text x="907.2" y="603.9" font-size="8.5" fill="#000" stroke="#000" stroke-width="0.25" font-weight="normal" text-anchor="middle" dominant-baseline="central">2448.41</text><text x="933.0" y="547.2" font-size="8.5" fill="#000" stroke="#000" stroke-width="0.25" font-weight="normal" text-anchor="middle" dominant-baseline="central">2542.61</text><text x="895.1" y="559.8" font-size="8.5" fill="#000" stroke="#000" stroke-width="0.25" font-weight="normal" text-anchor="middle" dominant-baseline="central">2455.91</text><text x="913.3" y="500.2" font-size="8.5" fill="#808080" stroke="#808080" stroke-width="0.25" font-weight="normal" text-anchor="middle" dominant-baseline="central">2593.47</text><text x="877.4" y="517.5" font-size="8.5" fill="#808080" stroke="#808080" stroke-width="0.25" font-weight="normal" text-anchor="middle" dominant-baseline="central">2463.41</text><text x="887.6" y="456.1" font-size="8.5" fill="#000" stroke="#000" stroke-width="0.25" font-weight="normal" text-anchor="middle" dominant-baseline="central">2644.32</text><text x="854.3" y="478.0" font-size="8.5" fill="#000" stroke="#000" stroke-width="0.25" font-weight="normal" text-anchor="middle" dominant-baseline="central">2470.91</text><text x="856.4" y="415.7" font-size="8.5" fill="#000" stroke="#000" stroke-width="0.25" font-weight="normal" text-anchor="middle" dominant-baseline="central">2695.17</text><text x="826.2" y="441.8" font-size="8.5" fill="#000" stroke="#000" stroke-width="0.25" font-weight="normal" text-anchor="middle" dominant-baseline="central">2478.41</text><text x="820.1" y="379.8" font-size="8.5" fill="#600000" stroke="#600000" stroke-width="0.25" font-weight="normal" text-anchor="middle" dominant-baseline="central">2746.02</text><text x="793.6" y="409.6" font-size="8.5" fill="#600000" stroke="#600000" stroke-width="0.25" font-weight="normal" text-anchor="middle" dominant-baseline="central">2485.91</text><text x="779.5" y="348.9" font-size="8.5" fill="#000" stroke="#000" stroke-width="0.25" font-weight="normal" text-anchor="middle" dominant-baseline="central">2796.88</text><text x="757.1" y="381.9" font-size="8.5" fill="#000" stroke="#000" stroke-width="0.25" font-weight="normal" text-anchor="middle" dominant-baseline="central">2493.41</text><text x="735.2" y="323.5" font-size="8.5" fill="#000" stroke="#000" stroke-width="0.25" font-weight="normal" text-anchor="middle" dominant-baseline="central">2847.73</text><text x="717.3" y="359.2" font-size="8.5" fill="#000" stroke="#000" stroke-width="0.25" font-weight="normal" text-anchor="middle" dominant-baseline="central">2500.91</text><text x="688.0" y="304.2" font-size="8.5" fill="#808080" stroke="#808080" stroke-width="0.25" font-weight="normal" text-anchor="middle" dominant-baseline="central">2898.58</text><text x="674.9" y="341.9" font-size="8.5" fill="#808080" stroke="#808080" stroke-width="0.25" font-weight="normal" text-anchor="middle" dominant-baseline="central">2508.41</text><text x="638.7" y="291.2" font-size="8.5" fill="#000" stroke="#000" stroke-width="0.25" font-weight="normal" text-anchor="middle" dominant-baseline="central">2949.43</text><text x="630.6" y="330.2" font-size="8.5" fill="#000" stroke="#000" stroke-width="0.25" font-weight="normal" text-anchor="middle" dominant-baseline="central">2515.91</text><text x="588.1" y="284.7" font-size="8.5" fill="#000" stroke="#000" stroke-width="0.25" font-weight="normal" text-anchor="middle" dominant-baseline="central">3000.29</text><text x="585.2" y="324.5" font-size="8.5" fill="#000" stroke="#000" stroke-width="0.25" font-weight="normal" text-anchor="middle" dominant-baseline="central">2523.41</text><text x="537.0" y="284.9" font-size="8.5" fill="#c01818" stroke="#c01818" stroke-width="0.25" font-weight="normal" text-anchor="middle" dominant-baseline="central">3051.14</text><text x="539.4" y="324.7" font-size="8.5" fill="#c01818" stroke="#c01818" stroke-width="0.25" font-weight="normal" text-anchor="middle" dominant-baseline="central">2530.91</text><text x="486.5" y="291.8" font-size="8.5" fill="#000" stroke="#000" stroke-width="0.25" font-weight="normal" text-anchor="middle" dominant-baseline="central">3101.99</text><text x="494.0" y="331.0" font-size="8.5" fill="#000" stroke="#000" stroke-width="0.25" font-weight="normal" text-anchor="middle" dominant-baseline="central">2538.41</text><text x="437.2" y="305.2" font-size="8.5" fill="#000" stroke="#000" stroke-width="0.25" font-weight="normal" text-anchor="middle" dominant-baseline="central">3152.84</text><text x="449.8" y="343.0" font-size="8.5" fill="#000" stroke="#000" stroke-width="0.25" font-weight="normal" text-anchor="middle" dominant-baseline="central">2545.91</text><text x="390.2" y="324.9" font-size="8.5" fill="#808080" stroke="#808080" stroke-width="0.25" font-weight="normal" text-anchor="middle" dominant-baseline="central">3203.69</text><text x="407.6" y="360.8" font-size="8.5" fill="#808080" stroke="#808080" stroke-width="0.25" font-weight="normal" text-anchor="middle" dominant-baseline="central">2553.41</text><text x="346.1" y="350.6" font-size="8.5" fill="#000080" stroke="#000080" stroke-width="0.25" font-weight="normal" text-anchor="middle" dominant-baseline="central">3254.55</text><text x="368.0" y="383.9" font-size="8.5" fill="#000080" stroke="#000080" stroke-width="0.25" font-weight="normal" text-anchor="middle" dominant-baseline="central">2560.91</text><text x="305.7" y="381.8" font-size="8.5" fill="#000" stroke="#000" stroke-width="0.25" font-weight="normal" text-anchor="middle" dominant-baseline="central">3305.40</text><text x="331.8" y="412.0" font-size="8.5" fill="#000" stroke="#000" stroke-width="0.25" font-weight="normal" text-anchor="middle" dominant-baseline="central">2568.41</text><text x="269.8" y="418.1" font-size="8.5" fill="#600000" stroke="#600000" stroke-width="0.25" font-weight="normal" text-anchor="middle" dominant-baseline="central">3356.25</text><text x="299.6" y="444.5" font-size="8.5" fill="#600000" stroke="#600000" stroke-width="0.25" font-weight="normal" text-anchor="middle" dominant-baseline="central">2575.91</text><text x="238.9" y="458.7" font-size="8.5" fill="#000" stroke="#000" stroke-width="0.25" font-weight="normal" text-anchor="middle" dominant-baseline="central">3407.10</text><text x="271.9" y="481.0" font-size="8.5" fill="#000" stroke="#000" stroke-width="0.25" font-weight="normal" text-anchor="middle" dominant-baseline="central">2583.41</text><text x="213.5" y="503.0" font-size="8.5" fill="#000" stroke="#000" stroke-width="0.25" font-weight="normal" text-anchor="middle" dominant-baseline="central">3457.96</text><text x="249.2" y="520.8" font-size="8.5" fill="#000" stroke="#000" stroke-width="0.25" font-weight="normal" text-anchor="middle" dominant-baseline="central">2590.91</text><text x="194.2" y="550.2" font-size="8.5" fill="#808080" stroke="#808080" stroke-width="0.25" font-weight="normal" text-anchor="middle" dominant-baseline="central">3508.81</text><text x="231.9" y="563.2" font-size="8.5" fill="#808080" stroke="#808080" stroke-width="0.25" font-weight="normal" text-anchor="middle" dominant-baseline="central">2598.41</text><text x="181.2" y="599.5" font-size="8.5" fill="#000" stroke="#000" stroke-width="0.25" font-weight="normal" text-anchor="middle" dominant-baseline="central">3559.66</text><text x="220.3" y="607.5" font-size="8.5" fill="#000" stroke="#000" stroke-width="0.25" font-weight="normal" text-anchor="middle" dominant-baseline="central">2605.91</text><text x="174.7" y="650.1" font-size="8.5" fill="#000" stroke="#000" stroke-width="0.25" font-weight="normal" text-anchor="middle" dominant-baseline="central">3610.51</text><text x="214.5" y="653.0" font-size="8.5" fill="#000" stroke="#000" stroke-width="0.25" font-weight="normal" text-anchor="middle" dominant-baseline="central">2613.41</text><rect x="976.4" y="639.3" width="10.5" height="10" fill="#e020e0"/><text x="981.7" y="644.3" font-size="8" fill="#fff" stroke="#fff" stroke-width="0.25" font-weight="normal" text-anchor="middle" dominant-baseline="central">02</text><text x="970.2" y="563.9" font-size="8" fill="#000" stroke="#000" stroke-width="0.25" font-weight="normal" text-anchor="middle" dominant-baseline="central">3.13</text><text x="941.1" y="487.1" font-size="8" fill="#808080" stroke="#808080" stroke-width="0.25" font-weight="normal" text-anchor="middle" dominant-baseline="central">6.25</text><text x="897.7" y="417.6" font-size="8" fill="#000" stroke="#000" stroke-width="0.25" font-weight="normal" text-anchor="middle" dominant-baseline="central">9.38</text><text x="841.5" y="357.8" font-size="8" fill="#600000" stroke="#600000" stroke-width="0.25" font-weight="normal" text-anchor="middle" dominant-baseline="central">12.50</text><text x="774.7" y="310.1" font-size="8" fill="#000" stroke="#000" stroke-width="0.25" font-weight="normal" text-anchor="middle" dominant-baseline="central">15.63</text><text x="699.9" y="276.4" font-size="8" fill="#808080" stroke="#808080" stroke-width="0.25" font-weight="normal" text-anchor="middle" dominant-baseline="central">18.75</text><text x="620.0" y="257.9" font-size="8" fill="#000" stroke="#000" stroke-width="0.25" font-weight="normal" text-anchor="middle" dominant-baseline="central">21.88</text><text x="538.0" y="255.3" font-size="8" fill="#c01818" stroke="#c01818" stroke-width="0.25" font-weight="normal" text-anchor="middle" dominant-baseline="central">25.00</text><text x="457.1" y="268.8" font-size="8" fill="#000" stroke="#000" stroke-width="0.25" font-weight="normal" text-anchor="middle" dominant-baseline="central">28.13</text><text x="380.3" y="297.9" font-size="8" fill="#808080" stroke="#808080" stroke-width="0.25" font-weight="normal" text-anchor="middle" dominant-baseline="central">31.25</text><text x="310.8" y="341.3" font-size="8" fill="#000" stroke="#000" stroke-width="0.25" font-weight="normal" text-anchor="middle" dominant-baseline="central">34.38</text><text x="251.0" y="397.5" font-size="8" fill="#600000" stroke="#600000" stroke-width="0.25" font-weight="normal" text-anchor="middle" dominant-baseline="central">37.50</text><text x="203.3" y="464.3" font-size="8" fill="#000" stroke="#000" stroke-width="0.25" font-weight="normal" text-anchor="middle" dominant-baseline="central">40.63</text><text x="169.6" y="539.1" font-size="8" fill="#808080" stroke="#808080" stroke-width="0.25" font-weight="normal" text-anchor="middle" dominant-baseline="central">43.75</text><text x="151.1" y="619.0" font-size="8" fill="#000" stroke="#000" stroke-width="0.25" font-weight="normal" text-anchor="middle" dominant-baseline="central">46.88</text><text x="148.5" y="701.0" font-size="8" fill="#000" stroke="#000" stroke-width="0.25" font-weight="normal" text-anchor="middle" dominant-baseline="central">50.00</text><text x="330.9" y="326.8" font-size="8" fill="#000080" stroke="#000080" stroke-width="0.25" font-weight="normal" text-anchor="middle" dominant-baseline="central">33.33</text><rect x="998.4" y="670.3" width="6.2" height="10" fill="#e020e0"/><text x="1001.5" y="675.3" font-size="8" fill="#fff" stroke="#fff" stroke-width="0.25" font-weight="normal" text-anchor="middle" dominant-baseline="central">0</text><text x="988.5" y="559.6" font-size="8" fill="#000" stroke="#000" stroke-width="0.25" font-weight="normal" text-anchor="middle" dominant-baseline="central">15</text><text x="944.7" y="453.7" font-size="8" fill="#000" stroke="#000" stroke-width="0.25" font-weight="normal" text-anchor="middle" dominant-baseline="central">30</text><text x="874.9" y="362.7" font-size="8" fill="#600000" stroke="#600000" stroke-width="0.25" font-weight="normal" text-anchor="middle" dominant-baseline="central">45</text><text x="783.9" y="292.9" font-size="8" fill="#000" stroke="#000" stroke-width="0.25" font-weight="normal" text-anchor="middle" dominant-baseline="central">60</text><text x="678.0" y="249.1" font-size="8" fill="#000" stroke="#000" stroke-width="0.25" font-weight="normal" text-anchor="middle" dominant-baseline="central">75</text><text x="564.3" y="234.1" font-size="8" fill="#c01818" stroke="#c01818" stroke-width="0.25" font-weight="normal" text-anchor="middle" dominant-baseline="central">90</text><text x="450.6" y="249.1" font-size="8" fill="#000" stroke="#000" stroke-width="0.25" font-weight="normal" text-anchor="middle" dominant-baseline="central">105</text><text x="344.7" y="292.9" font-size="8" fill="#000080" stroke="#000080" stroke-width="0.25" font-weight="normal" text-anchor="middle" dominant-baseline="central">120</text><text x="253.7" y="362.7" font-size="8" fill="#600000" stroke="#600000" stroke-width="0.25" font-weight="normal" text-anchor="middle" dominant-baseline="central">135</text><text x="183.9" y="453.7" font-size="8" fill="#000" stroke="#000" stroke-width="0.25" font-weight="normal" text-anchor="middle" dominant-baseline="central">150</text><text x="140.1" y="559.6" font-size="8" fill="#000" stroke="#000" stroke-width="0.25" font-weight="normal" text-anchor="middle" dominant-baseline="central">165</text><text x="125.1" y="673.3" font-size="8" fill="#e020e0" stroke="#e020e0" stroke-width="0.25" font-weight="normal" text-anchor="middle" dominant-baseline="central">180</text></g><g font-family="Liberation Sans"><text x="505" y="110" font-size="14" fill="#008000" font-weight="bold" text-anchor="middle" dominant-baseline="central">夏至</text><text x="637" y="110" font-size="14" fill="#008000" font-weight="bold" text-anchor="middle" dominant-baseline="central">芒种</text><text x="334" y="155" font-size="14" fill="#008000" font-weight="bold" text-anchor="middle" dominant-baseline="central">小暑</text><text x="806" y="157" font-size="14" fill="#008000" font-weight="bold" text-anchor="middle" dominant-baseline="central">小满</text><text x="222" y="223" font-size="14" fill="#008000" font-weight="bold" text-anchor="middle" dominant-baseline="central">大暑</text><text x="918" y="226" font-size="14" fill="#008000" font-weight="bold" text-anchor="middle" dominant-baseline="central">立夏</text><text x="128" y="314" font-size="14" fill="#008000" font-weight="bold" text-anchor="middle" dominant-baseline="central">立秋</text><text x="1011" y="319" font-size="14" fill="#008000" font-weight="bold" text-anchor="middle" dominant-baseline="central">谷雨</text><text x="38" y="466" font-size="14" fill="#008000" font-weight="bold" text-anchor="middle" dominant-baseline="central">处暑</text><text x="1098" y="471" font-size="14" fill="#008000" font-weight="bold" text-anchor="middle" dominant-baseline="central">清明</text><text x="4" y="591" font-size="14" fill="#008000" font-weight="bold" text-anchor="middle" dominant-baseline="central">白露</text><text x="1132" y="600" font-size="14" fill="#008000" font-weight="bold" text-anchor="middle" dominant-baseline="central">春分</text><text x="497" y="145" font-size="14" fill="#d01010" font-weight="bold" text-anchor="middle" dominant-baseline="central">21/6</text><text x="632" y="145" font-size="14" fill="#000" font-weight="bold" text-anchor="middle" dominant-baseline="central">5/6</text><text x="359" y="181" font-size="14" fill="#000" font-weight="bold" text-anchor="middle" dominant-baseline="central">7/7</text><text x="771" y="181" font-size="14" fill="#000" font-weight="bold" text-anchor="middle" dominant-baseline="central">21/5</text><text x="242" y="250" font-size="14" fill="#000" font-weight="bold" text-anchor="middle" dominant-baseline="central">23/7</text><text x="887" y="250" font-size="14" fill="#d01010" font-weight="bold" text-anchor="middle" dominant-baseline="central">5/5</text><text x="140" y="349" font-size="14" fill="#d01010" font-weight="bold" text-anchor="middle" dominant-baseline="central">7/8</text><text x="990" y="349" font-size="14" fill="#000" font-weight="bold" text-anchor="middle" dominant-baseline="central">20/4</text><text x="75" y="468" font-size="14" fill="#000" font-weight="bold" text-anchor="middle" dominant-baseline="central">23/8</text><text x="1055" y="469" font-size="14" fill="#000" font-weight="bold" text-anchor="middle" dominant-baseline="central">5/4</text><text x="35" y="603" font-size="14" fill="#000" font-weight="bold" text-anchor="middle" dominant-baseline="central">7/9</text><text x="1095" y="603" font-size="14" fill="#d01010" font-weight="bold" text-anchor="middle" dominant-baseline="central">21/3</text><text x="499" y="177" font-size="14" fill="#d01010" font-weight="bold" text-anchor="middle" dominant-baseline="central">90</text><text x="629" y="177" font-size="14" fill="#000080" font-weight="bold" text-anchor="middle" dominant-baseline="central">75</text><text x="376" y="211" font-size="14" fill="#000080" font-weight="bold" text-anchor="middle" dominant-baseline="central">105</text><text x="756" y="211" font-size="14" fill="#000080" font-weight="bold" text-anchor="middle" dominant-baseline="central">60</text><text x="263" y="276" font-size="14" fill="#000080" font-weight="bold" text-anchor="middle" dominant-baseline="central">120</text><text x="869" y="276" font-size="14" fill="#d01010" font-weight="bold" text-anchor="middle" dominant-baseline="central">45</text><text x="171" y="368" font-size="14" fill="#d01010" font-weight="bold" text-anchor="middle" dominant-baseline="central">135</text><text x="961" y="368" font-size="14" fill="#000080" font-weight="bold" text-anchor="middle" dominant-baseline="central">30</text><text x="106" y="481" font-size="14" fill="#000080" font-weight="bold" text-anchor="middle" dominant-baseline="central">150</text><text x="1026" y="481" font-size="14" fill="#000080" font-weight="bold" text-anchor="middle" dominant-baseline="central">15</text><text x="72" y="608" font-size="14" fill="#000080" font-weight="bold" text-anchor="middle" dominant-baseline="central">165</text><text x="1055" y="608" font-size="14" fill="#d01010" font-weight="bold" text-anchor="middle" dominant-baseline="central">0</text></g><ellipse cx="538.8" cy="285" rx="25.5" ry="15" fill="none" stroke="#d23cdc" stroke-width="3"/><polygon points="527.0,265.2 512.5,197.0 515.3,196.3 506.9,185.0 504.6,198.9 507.4,198.2 525.8,265.4" fill="#d23cdc"/><ellipse cx="345.9" cy="351.8" rx="22.5" ry="16" fill="none" stroke="#d23cdc" stroke-width="3"/><polygon points="323.4,335.2 280.1,289.3 282.1,287.3 269.0,282.0 274.4,295.1 276.4,293.0 322.6,336.0" fill="#d23cdc"/><ellipse cx="819.6" cy="376" rx="24" ry="14.5" fill="none" stroke="#d23cdc" stroke-width="3"/><polygon points="824.9,353.7 861.5,296.9 864.0,298.4 866.0,284.4 854.6,292.7 857.1,294.2 823.9,353.1" fill="#d23cdc"/><ellipse cx="947.5" cy="644.4" rx="57.5" ry="24.5" fill="none" stroke="#d23cdc" stroke-width="3"/><polygon points="783.0,649.7 861.3,650.0 861.3,653.5 872.3,648.5 861.3,643.5 861.3,647.0 783.0,646.7" fill="#d23cdc"/></svg>
<div class="a" style="left:986px;top:117px;width:134px;height:73px;border:3px solid #d23cdc"></div>
<div class="a" style="left:1001px;top:132px;font-size:19px;line-height:24px;color:#d04ad8">江恩轮中轮<br>上帝之眼</div>
<div class="a" style="left:1015px;top:628px;font-size:19px;line-height:22px;color:#d04ad8">价格起点</div>
<div class="a" style="left:0;top:0;width:1168px;height:678px;overflow:hidden;pointer-events:none">
<div class="a" style="left:292px;top:321px;transform:translate(-50%,-50%) rotate(-41.4deg);font-size:84px;line-height:90px;font-weight:bold;color:rgba(90,90,90,0.25);letter-spacing:6px">赢家财富网</div>
<div class="a" style="left:336px;top:379px;transform:translate(-50%,-50%) rotate(-42.5deg);font-size:44px;line-height:48px;font-weight:bold;color:#5a5a5a;-webkit-text-stroke:1.6px #5a5a5a;opacity:0.3">www.yingjia360.com</div>
<div class="a" style="left:380px;top:491px;font-size:20px;line-height:24px;font-weight:bold;letter-spacing:-0.45px;color:rgba(90,90,90,0.42)">QQ:1080800260</div>
</div>
</body></html>
